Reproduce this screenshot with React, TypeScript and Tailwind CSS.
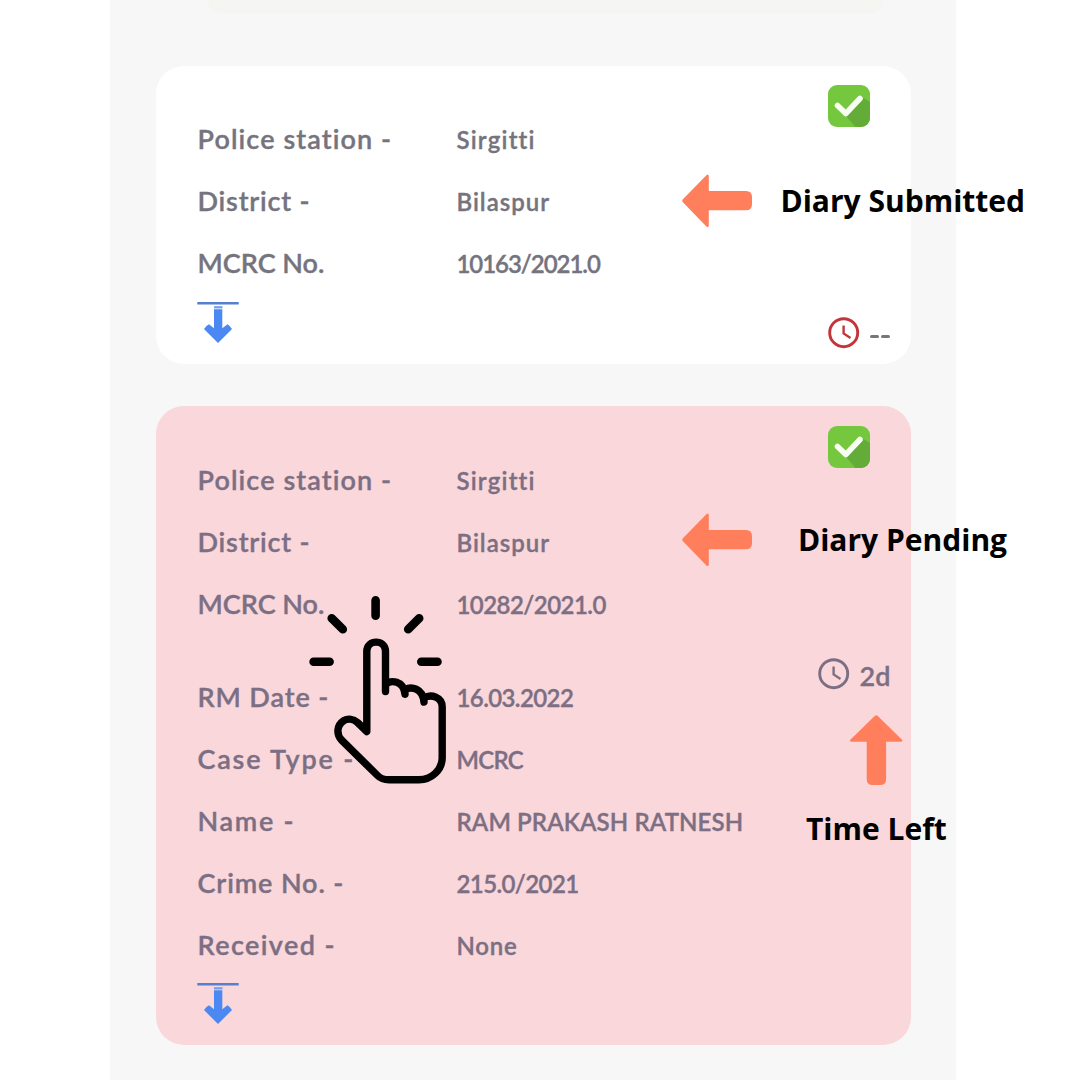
import React from "react";

type Row = { label: string; value: string; labelTrack: string; valueTrack: string };

const submittedRows: Row[] = [
  { label: "Police station -", value: "Sirgitti", labelTrack: "tracking-[1.1px]", valueTrack: "tracking-[1.2px]" },
  { label: "District -", value: "Bilaspur", labelTrack: "tracking-[0.8px]", valueTrack: "tracking-[1px]" },
  { label: "MCRC No.", value: "10163/2021.0", labelTrack: "tracking-[0px]", valueTrack: "tracking-[-1.05px]" },
];

const pendingRows: Row[] = [
  submittedRows[0],
  submittedRows[1],
  { label: "MCRC No.", value: "10282/2021.0", labelTrack: "tracking-[0px]", valueTrack: "tracking-[-0.55px]" },
];

const detailRows: Row[] = [
  { label: "RM Date -", value: "16.03.2022", labelTrack: "tracking-[0.9px]", valueTrack: "tracking-[-0.6px]" },
  { label: "Case Type -", value: "MCRC", labelTrack: "tracking-[1.8px]", valueTrack: "tracking-[-0.7px]" },
  { label: "Name -", value: "RAM PRAKASH RATNESH", labelTrack: "tracking-[1.7px]", valueTrack: "tracking-[0.1px]" },
  { label: "Crime No. -", value: "215.0/2021", labelTrack: "tracking-[0.9px]", valueTrack: "tracking-[-0.6px]" },
  { label: "Received -", value: "None", labelTrack: "tracking-[1.4px]", valueTrack: "tracking-[0.8px]" },
];

function Rows({ rows }: { rows: Row[] }) {
  return (
    <dl className="[-webkit-text-stroke:0.35px_currentColor]">
      {rows.map((r) => (
        <div key={r.label} className="flex h-[62px] items-center whitespace-nowrap">
          <dt className="w-[259px] shrink-0 pb-[2px] text-[27px] leading-8">
            <span className={r.labelTrack}>{r.label}</span>
          </dt>
          <dd className="text-[24px] leading-8">
            <span className={r.valueTrack}>{r.value}</span>
          </dd>
        </div>
      ))}
    </dl>
  );
}

function CheckBadge() {
  return (
    <svg viewBox="0 0 42 42" className="mr-[21px] block size-[42px]">
      <rect width="42" height="42" rx="9" fill="#75c73e" />
      <path d="M18 31L34.500 12.500L42 17V33a9 9 0 0 1-9 9H27.500z" fill="#62ac37" />
      <path d="M9.500 20.500L17.800 28.500L32 13.500" fill="none" stroke="#f8fff2" strokeWidth="5.600" strokeLinecap="round" strokeLinejoin="round" />
    </svg>
  );
}

function DownloadIcon() {
  return (
    <svg viewBox="0 0 42 42" className="-ml-px block size-[42px]">
      <path d="M.3 1.300H41.700" stroke="#5580d0" strokeWidth="2.400" />
      <path d="M17 5.300H25.500" stroke="#6f9ff2" strokeWidth="2.200" />
      <path d="M17 7.200H25.300V26.200L30.500 22.300Q32.500 23.500 35 27L21 41L7 27Q9.500 23.500 12 22.300L17 26.200z" fill="#4b88f2" />
    </svg>
  );
}

function ClockIcon() {
  return (
    <svg viewBox="0 0 32 32" className="block size-8" fill="none" stroke="currentColor">
      <circle cx="15.700" cy="15.700" r="14" strokeWidth="2.900" />
      <path d="M15.600 8.400V16.400L22.500 20.900" strokeWidth="2.400" />
    </svg>
  );
}

function Arrow({ className }: { className: string }) {
  return (
    <svg viewBox="0 0 70 54" className={className}>
      <path
        d="M.9 25.200L24.400 1.200Q26.700-.4 26.800 2.200V16.900H64Q70 16.900 70 22.900V30.300Q70 36.300 64 36.300H26.800V51.400Q26.500 54 24.400 52.400L.9 28.300Q-.4 26.700 .9 25.200z"
        fill="#ff7f5c"
      />
    </svg>
  );
}

function TapHand() {
  return (
    <svg
      viewBox="300 590 160 200"
      className="absolute left-[300px] top-[590px] h-[200px] w-[160px]"
      fill="none"
      stroke="#000"
      strokeLinecap="round"
      strokeLinejoin="round"
    >
      <path strokeWidth="8.600" d="M375.600 600.300V615.800M331.700 618.200L342.800 629.200M419.200 618.200L408.200 629.200M313.600 661.800H329.600M421.300 661.800H437.500" />
      <path
        strokeWidth="7.400"
        d="M366.800 731.500V651.500C366.800 639 385.500 639 385.500 651.500V691.500V684.500C391 679.500 403.500 680.500 405 694.200V689.500C411 686.500 422.500 687.500 424 702V698C431 693.500 442.200 697 442.200 707V758C442 770 431.500 779.800 419 779.800H389C384.500 779.800 380.500 778.500 377.500 775.500L341.500 740C336 734 337 725 343.500 720.800C348 718.300 353.500 719 357.500 722.500z"
      />
    </svg>
  );
}

export default function App() {
  return (
    <div className="relative h-[1080px] w-[1080px] overflow-hidden bg-white font-['Open_Sans','Noto_Sans',sans-serif]">
      <main className="ml-[110px] flex h-full w-[846px] flex-col bg-[#f7f7f7] px-[45.500px] font-['Lato',sans-serif] font-semibold">
        <div className="ml-[52px] mr-7 h-[13px] shrink-0 rounded-b-xl bg-[#f5f5f1]" />

        <section className="mt-[53px] flex h-[298px] shrink-0 justify-between rounded-[28px] bg-white pl-[42px] pr-[21px] text-[#75747e]">
          <div className="flex flex-col gap-[7px] pt-[42.500px]">
            <Rows rows={submittedRows} />
            <DownloadIcon />
          </div>
          <div className="flex flex-col items-end justify-between pb-[15px] pt-[19px]">
            <div className="-mr-px"><CheckBadge /></div>
            <div className="flex items-center gap-[10px]">
              <span className="text-[#c5343a]"><ClockIcon /></span>
              <span className="flex w-5 justify-between pt-[6px]">
                <i className="h-[3px] w-[9px] rounded-full bg-[#777]" />
                <i className="h-[3px] w-[9px] rounded-full bg-[#777]" />
              </span>
            </div>
          </div>
        </section>

        <section className="mt-[41.500px] flex h-[639.500px] shrink-0 justify-between rounded-[28px] bg-[#f9d7da] pl-[42px] pr-5 text-[#7c6f84]">
          <div className="flex flex-col pt-[44px]">
            <Rows rows={pendingRows} />
            <div className="mb-[6.500px] mt-[31px]"><Rows rows={detailRows} /></div>
            <DownloadIcon />
          </div>
          <div className="flex flex-col items-end gap-[189.500px] pt-[20.500px]">
            <CheckBadge />
            <div className="flex h-8 items-center gap-[9.500px]">
              <ClockIcon />
              <span className="pt-[4px] text-[27px] leading-8 [-webkit-text-stroke:0.35px_currentColor]">2d</span>
            </div>
          </div>
        </section>
      </main>

      <TapHand />

      <div className="absolute left-[682px] top-[174px] flex items-center gap-[28.500px] whitespace-nowrap text-[30px] font-bold leading-[54px] text-black">
        <Arrow className="h-[54px] w-[70px]" />
        <p>Diary Submitted</p>
      </div>

      <div className="absolute left-[682px] top-[513px] flex items-center gap-[46px] whitespace-nowrap text-[30px] font-bold leading-[54px] text-black">
        <Arrow className="h-[54px] w-[70px]" />
        <p>Diary Pending</p>
      </div>

      <div className="absolute left-[806px] top-[723px] flex flex-col items-center gap-[25px] whitespace-nowrap text-[30px] font-bold leading-[54px] text-black">
        <Arrow className="h-[54px] w-[70px] rotate-90" />
        <p>Time Left</p>
      </div>
    </div>
  );
}
